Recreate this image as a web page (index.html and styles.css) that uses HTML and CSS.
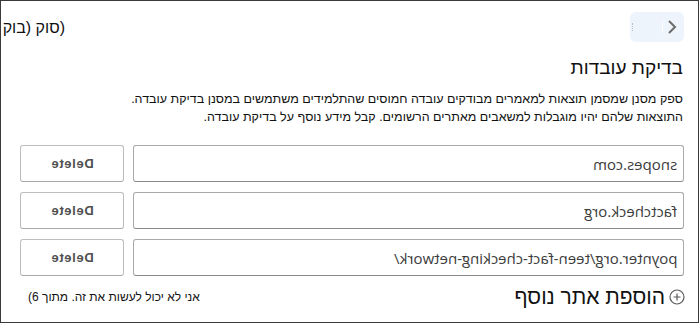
FILE: index.html
```html
<!DOCTYPE html>
<html lang="he">
<head>
<meta charset="utf-8">
<link rel="stylesheet" href="styles.css">
</head>
<body>
<div class="frame" dir="rtl">
  <div class="header">
    <div class="back-btn">
      <svg class="chev" width="10" height="16" viewBox="0 0 10 16"><path d="M2 2 L8 8 L2 14" fill="none" stroke="#6b6b6b" stroke-width="2"/></svg>
      <span class="sep"></span>
      <span class="dots"></span>
    </div>
    <div class="cut-title">(סוק (בוק</div>
  </div>
  <h1 class="title">בדיקת עובדות</h1>
  <p class="desc">ספק מסנן שמסמן תוצאות למאמרים מבודקים עובדה חמוסים שהתלמידים משתמשים במסנן בדיקת עובדה.<br>התוצאות שלהם יהיו מוגבלות למשאבים מאתרים הרשומים. קבל מידע נוסף על בדיקת עובדה.</p>
  <div class="rows">
    <div class="row">
      <div class="field"><span class="mirror">snopes.com</span></div>
      <div class="del"><span class="mirror">Delete</span></div>
    </div>
    <div class="row">
      <div class="field"><span class="mirror">factcheck.org</span></div>
      <div class="del"><span class="mirror">Delete</span></div>
    </div>
    <div class="row">
      <div class="field"><span class="mirror">poynter.org/teen-fact-checking-network/</span></div>
      <div class="del"><span class="mirror">Delete</span></div>
    </div>
  </div>
  <div class="footer">
    <div class="add">
      <svg class="plus" width="16" height="16" viewBox="0 0 16 16"><circle cx="8" cy="8" r="7" fill="none" stroke="#5a5a5a" stroke-width="1.2"/><path d="M8 4.5 V11.5 M4.5 8 H11.5" stroke="#5a5a5a" stroke-width="1.2"/></svg>
      <span class="add-text">הוספת אתר נוסף</span>
    </div>
    <div class="note">אני לא יכול לעשות את זה. מתוך 6)</div>
  </div>
</div>
</body>
</html>
```
FILE: styles.css
```css
html, body {
  margin: 0;
  padding: 0;
  background: #fff;
}
body {
  font-family: "Liberation Sans", Arial, sans-serif;
  color: #111;
}
.frame {
  box-sizing: border-box;
  width: 699px;
  height: 323px;
  border: 1px solid #3a3a3a;
  overflow: hidden;
  padding: 11px 14px 0 19px;
}
.header {
  display: flex;
  justify-content: space-between;
  align-items: center;
  height: 30px;
}
.back-btn {
  width: 54px;
  height: 30px;
  margin-left: -1px;
  background: #eef4fb;
  border-radius: 6px;
  display: flex;
  align-items: center;
  padding-right: 7px;
  box-sizing: border-box;
}
.chev {
  display: block;
}
.sep {
  width: 1px;
  height: 12px;
  background: #fbfdff;
  margin-right: 4px;
}
.dots {
  width: 1px;
  height: 8px;
  margin-right: 28px;
  border-left: 1px dotted #b9bfc6;
}
.cut-title {
  width: 45px;
  white-space: nowrap;
  font-size: 16px;
  line-height: 20px;
  color: #111;
  margin-top: 2px;
}
.title {
  margin: 14px 1px 0 0;
  font-size: 19px;
  font-weight: normal;
  line-height: 24px;
  color: #111;
}
.desc {
  margin: 10px 1px 0 0;
  font-size: 12.5px;
  line-height: 18px;
  color: #111;
}
.rows {
  margin-top: 19px;
  display: flex;
  flex-direction: column;
  gap: 10px;
}
.row {
  display: flex;
  gap: 9px;
  height: 37px;
}
.field {
  flex: 1;
  box-sizing: border-box;
  border: 1px solid #a9a9a9;
  border-bottom-color: #8a8a8a;
  border-radius: 3px;
  display: flex;
  align-items: center;
  padding-right: 6px;
}
.del {
  width: 104px;
  box-sizing: border-box;
  border: 1px solid #bdbdbd;
  border-bottom-color: #a8a8a8;
  border-radius: 3px;
  display: flex;
  align-items: center;
  justify-content: center;
}
.mirror {
  display: inline-block;
  transform: scaleX(-1);
  direction: ltr;
  white-space: nowrap;
}
.field .mirror {
  font-family: "Open Sans", "Liberation Sans", sans-serif;
  font-size: 15px;
  color: #3c3c3c;
}
.del .mirror {
  font-size: 13px;
  font-weight: bold;
  color: #505050;
  letter-spacing: 0.6px;
}
.footer {
  margin-top: 9px;
  display: flex;
  justify-content: space-between;
  align-items: center;
  height: 24px;
}
.add {
  display: flex;
  align-items: center;
  gap: 4px;
  margin-right: -1px;
}
.plus {
  display: block;
}
.add-text {
  font-size: 21px;
  line-height: 24px;
  color: #111;
}
.note {
  font-size: 12px;
  color: #111;
  margin-left: 8px;
}
```
